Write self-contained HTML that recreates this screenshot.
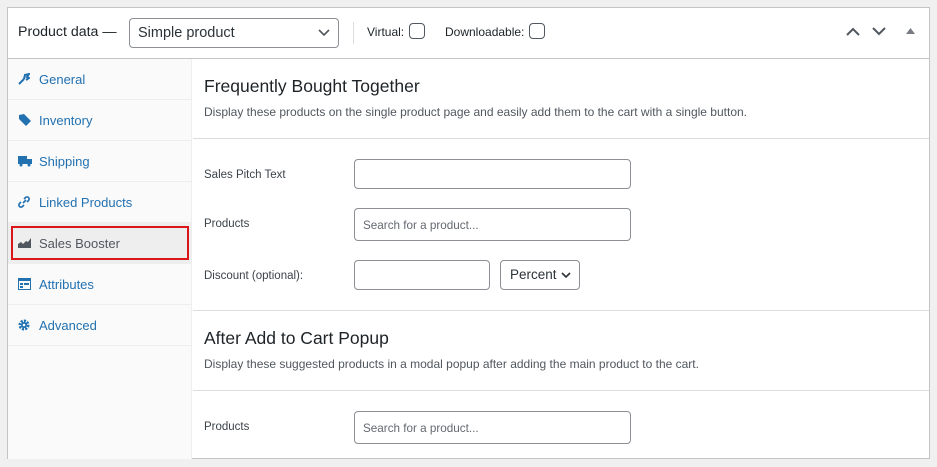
<!DOCTYPE html>
<html><head><style>
*{box-sizing:border-box;margin:0;padding:0}
body{width:937px;height:467px;background:#f0f0f1;font-family:"Liberation Sans",sans-serif;position:relative;overflow:hidden;color:#3c434a}
.panel{position:absolute;left:7px;top:7px;width:923px;height:452px;background:#fff;border:1px solid #c3c4c7}
.hdr{position:absolute;left:0;top:0;width:921px;height:51px;border-bottom:1px solid #c3c4c7}
.abs{position:absolute}
.side{position:absolute;left:0;top:51px;width:184px;height:400px;background:#fafafa;border-right:1px solid #eee}
.tab{position:absolute;left:0;width:183px;height:41px;border-bottom:1px solid #eee;color:#2271b1;font-size:13px;line-height:42px;padding-left:31px}
.tab svg{position:absolute;left:10px;top:14px}
.inp{position:absolute;border:1px solid #8c8f94;border-radius:4px;background:#fff;font-size:11.7px;color:#646970;padding-left:8px}
.lbl{position:absolute;font-size:11.5px;color:#3c434a}
.h{position:absolute;font-size:17.5px;color:#1d2327;font-weight:500}
.d{position:absolute;font-size:12px;color:#50575e}
.sep{position:absolute;left:185px;width:736px;height:1px;background:#dcdcde}
</style></head><body>
<div class="panel">
 <div class="hdr">
  <div class="abs" style="left:10px;top:16px;font-size:14.2px;color:#1d2327">Product data —</div>
  <div class="inp" style="left:121px;top:10px;width:210px;height:30px;color:#2c3338;font-size:14.5px;line-height:28px;padding-left:8px">Simple product
   <svg class="abs" style="right:8px;top:10px" width="12" height="8" viewBox="0 0 12 8"><path d="M1 1l5 5 5-5" fill="none" stroke="#50575e" stroke-width="1.6"/></svg></div>
  <div class="abs" style="left:345px;top:14px;width:1px;height:22px;background:#dcdcde"></div>
  <div class="abs" style="left:359px;top:17px;font-size:12px;color:#1d2327">Virtual:</div>
  <div class="abs" style="left:401px;top:15px;width:16px;height:16px;border:1px solid #50575e;border-radius:4px"></div>
  <div class="abs" style="left:437px;top:17px;font-size:12px;color:#1d2327">Downloadable:</div>
  <div class="abs" style="left:521px;top:15px;width:16px;height:16px;border:1px solid #50575e;border-radius:4px"></div>
  <svg class="abs" style="left:838px;top:19px" width="14" height="9" viewBox="0 0 14 9"><path d="M1 8l6-6 6 6" fill="none" stroke="#50575e" stroke-width="2"/></svg>
  <svg class="abs" style="left:864px;top:19px" width="14" height="9" viewBox="0 0 14 9"><path d="M1 1l6 6 6-6" fill="none" stroke="#50575e" stroke-width="2"/></svg>
  <svg class="abs" style="left:898px;top:20px" width="9" height="6" viewBox="0 0 9 6"><path d="M0 6l4.5-6 4.5 6z" fill="#787c82"/></svg>
 </div>
 <div class="side">
  <div class="tab" style="top:0"><svg width="12" height="12" viewBox="0 0 12 12"><path d="M1 11l5-5M6 6l1-4 4-1-2 3 2 1-3 2" fill="none" stroke="#2271b1" stroke-width="2"/></svg>General</div>
  <div class="tab" style="top:41px"><svg width="13" height="13" viewBox="0 0 13 13"><path d="M6 0l7 7-5 5-7-7V1z" fill="#2271b1"/></svg>Inventory</div>
  <div class="tab" style="top:82px"><svg width="14" height="12" viewBox="0 0 14 12"><rect x="0" y="1" width="9" height="8" fill="#2271b1"/><rect x="9" y="4" width="5" height="5" fill="#2271b1"/><circle cx="3" cy="10" r="1.5" fill="#2271b1"/><circle cx="11" cy="10" r="1.5" fill="#2271b1"/></svg>Shipping</div>
  <div class="tab" style="top:123px"><svg width="12" height="12" viewBox="0 0 12 12"><path d="M5 7l3-3M3 6L1.5 7.5a2 2 0 003 3L6 9M9 6l1.5-1.5a2 2 0 00-3-3L6 3" fill="none" stroke="#2271b1" stroke-width="1.6"/></svg>Linked Products</div>
  <div class="tab" style="top:164px;background:#eee;color:#50575e"><svg width="13" height="11" viewBox="0 0 13 11"><path d="M0 11V7l3-2 2 2 3-3 2 1 3-4v10z" fill="#50575e"/></svg>Sales Booster</div>
  <div class="abs" style="left:3px;top:167px;width:178px;height:34px;border:2px solid #d9161c"></div>
  <div class="tab" style="top:205px"><svg width="13" height="12" viewBox="0 0 13 12"><rect x="0.5" y="0.5" width="12" height="11" fill="none" stroke="#2271b1"/><rect x="0" y="0" width="13" height="3" fill="#2271b1"/><rect x="2" y="5" width="3" height="2" fill="#2271b1"/><rect x="6" y="5" width="5" height="2" fill="#2271b1"/><rect x="2" y="8" width="3" height="2" fill="#2271b1"/></svg>Attributes</div>
  <div class="tab" style="top:246px"><svg width="12" height="12" viewBox="0 0 12 12"><circle cx="6" cy="6" r="4" fill="none" stroke="#2271b1" stroke-width="3" stroke-dasharray="2 1.1"/><circle cx="6" cy="6" r="3" fill="#2271b1"/><circle cx="6" cy="6" r="1.3" fill="#fafafa"/></svg>Advanced</div>
 </div>
 <div class="h" style="left:196px;top:68px">Frequently Bought Together</div>
 <div class="d" style="left:196px;top:97px">Display these products on the single product page and easily add them to the cart with a single button.</div>
 <div class="sep" style="top:130px"></div>
 <div class="lbl" style="left:196px;top:161px">Sales Pitch Text</div>
 <div class="inp" style="left:346px;top:151px;width:277px;height:30px"></div>
 <div class="lbl" style="left:196px;top:210px">Products</div>
 <div class="inp" style="left:346px;top:200px;width:277px;height:33px;line-height:33px">Search for a product...</div>
 <div class="lbl" style="left:196px;top:262px">Discount (optional):</div>
 <div class="inp" style="left:346px;top:252px;width:136px;height:30px"></div>
 <div class="inp" style="left:492px;top:252px;width:80px;height:30px;color:#2c3338;font-size:13.5px;line-height:28px;padding-left:9px">Percent
  <svg class="abs" style="right:8px;top:11px" width="10" height="7" viewBox="0 0 10 7"><path d="M1 1l4 4 4-4" fill="none" stroke="#2c3338" stroke-width="1.6"/></svg></div>
 <div class="sep" style="top:302px"></div>
 <div class="h" style="left:196px;top:320px">After Add to Cart Popup</div>
 <div class="d" style="left:196px;top:349px">Display these suggested products in a modal popup after adding the main product to the cart.</div>
 <div class="sep" style="top:382px"></div>
 <div class="lbl" style="left:196px;top:413px">Products</div>
 <div class="inp" style="left:346px;top:403px;width:277px;height:33px;line-height:33px">Search for a product...</div>
</div>
</body></html>
